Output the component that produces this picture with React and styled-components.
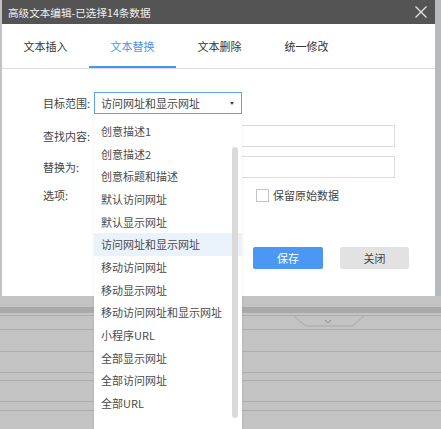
import React from "react";
import styled, { createGlobalStyle } from "styled-components";

const Global = createGlobalStyle`
  html, body { margin: 0; padding: 0; }
  body {
    background: #c3c3c3;
    font-family: "Noto Sans CJK SC", "Noto Sans", sans-serif;
    font-size: 11px;
    color: #444;
  }
  * { box-sizing: border-box; }
`;

const Page = styled.div`
  position: relative;
  width: 441px;
  height: 429px;
  overflow: hidden;
  background: #c3c3c3;
`;

const Backdrop = styled.div`
  display: flex;
  flex-direction: column;
`;

const BehindDialog = styled.div`
  height: 307px;
  display: flex;
  justify-content: flex-end;
`;

const SideStrip = styled.div`
  width: 6px;
  height: 296px;
  background: #b6b9be;
`;

const Band = styled.div`
  height: 6px;
  background: #a9a9a9;
`;

const TableRow = styled.div`
  position: relative;
  height: ${(p) => p.$h}px;
  border-bottom: 1px solid #adadad;
`;

const Handle = styled.svg`
  position: absolute;
  left: 293px;
  top: -1px;
`;

const Dialog = styled.div`
  position: absolute;
  left: 2px;
  top: 0;
  width: 433px;
  height: 296px;
  background: #fff;
  display: flex;
  flex-direction: column;
`;

const TitleBar = styled.div`
  height: 24px;
  background: #545454;
  color: #efefef;
  font-size: 10.6px;
  display: flex;
  align-items: center;
  justify-content: space-between;
  padding: 0 8px 0 6px;
`;

const Tabs = styled.div`
  display: flex;
  height: 45px;
  border-bottom: 1px solid #dedede;
`;

const Tab = styled.div`
  width: 87px;
  display: flex;
  align-items: center;
  justify-content: center;
  font-size: 11px;
  color: ${(p) => (p.$active ? "#4a94ee" : "#333")};
  border-bottom: 2px solid ${(p) => (p.$active ? "#4a94ee" : "transparent")};
  padding-top: 2px;
`;

const Body = styled.div`
  padding: 23px 0 0 41px;
  display: flex;
  flex-direction: column;
`;

const Row = styled.div`
  display: flex;
  align-items: center;
  height: 22px;
  margin-bottom: ${(p) => p.$mb || 0}px;
`;

const Label = styled.div`
  width: 51px;
  font-size: 11px;
  color: #444;
`;

const Select = styled.div`
  width: 148px;
  height: 22px;
  border: 1px solid #5fa0ef;
  display: flex;
  align-items: center;
  justify-content: space-between;
  padding: 0 7px 0 6px;
  font-size: 11px;
  color: #444;
`;

const Caret = styled.span`
  width: 0;
  height: 0;
  border-left: 2.5px solid transparent;
  border-right: 2.5px solid transparent;
  border-top: 3px solid #444;
`;

const Input = styled.div`
  width: 301px;
  height: 22px;
  border: 1px solid #dcdcdc;
`;

const Options = styled.div`
  display: flex;
  align-items: center;
  padding-left: 162px;
`;

const Option = styled.label`
  display: flex;
  align-items: center;
  gap: 4px;
  font-size: 11px;
  color: #444;
`;

const Box = styled.span`
  width: 13px;
  height: 13px;
  border: 1px solid #c4c4c4;
  background: #fff;
`;

const Buttons = styled.div`
  display: flex;
  justify-content: flex-end;
  gap: 17px;
  padding-right: 26px;
  margin-top: 41px;
`;

const Button = styled.div`
  width: ${(p) => p.$w}px;
  height: 22px;
  border-radius: 2px;
  display: flex;
  align-items: center;
  justify-content: center;
  font-size: 11px;
  background: ${(p) => (p.$primary ? "#4b97f4" : "#e2e2e2")};
  color: ${(p) => (p.$primary ? "#fff" : "#444")};
`;

const Menu = styled.div`
  position: absolute;
  left: 94px;
  top: 115px;
  width: 148px;
  height: 330px;
  background: #fff;
  box-shadow: 0 1px 3px rgba(0, 0, 0, 0.08);
  padding-top: 4.7px;
`;

const Item = styled.div`
  height: 22.67px;
  display: flex;
  align-items: center;
  padding-left: 7px;
  font-size: 11px;
  color: #4a4a4a;
  background: ${(p) => (p.$active ? "#eaf2fc" : "transparent")};
`;

const Thumb = styled.div`
  position: absolute;
  right: 4px;
  top: 32px;
  width: 6px;
  height: 271px;
  border-radius: 3px;
  background: #dadada;
`;

const items = [
  "创意描述1",
  "创意描述2",
  "创意标题和描述",
  "默认访问网址",
  "默认显示网址",
  "访问网址和显示网址",
  "移动访问网址",
  "移动显示网址",
  "移动访问网址和显示网址",
  "小程序URL",
  "全部显示网址",
  "全部访问网址",
  "全部URL",
];

export default function App() {
  return (
    <>
      <Global />
      <Page>
        <Backdrop>
          <BehindDialog>
            <SideStrip />
          </BehindDialog>
          <Band />
          <TableRow $h={3} />
          <TableRow $h={14}>
            <Handle width="72" height="12" viewBox="0 0 72 12">
              <path d="M1 1 L12 10.5 Q13 11 15 11 L57 11 Q59 11 60 10.5 L71 1" fill="none" stroke="#a9a9a9" strokeWidth="1" />
              <path d="M32 5 L35 8 L38 5" fill="none" stroke="#8a8a8a" strokeWidth="1" />
            </Handle>
          </TableRow>
          <TableRow $h={22} />
          <TableRow $h={21} />
          <TableRow $h={8} />
          <TableRow $h={21} />
          <TableRow $h={9} />
          <TableRow $h={20} />
        </Backdrop>

        <Dialog>
          <TitleBar>
            <span>高级文本编辑-已选择14条数据</span>
            <svg width="12" height="12" viewBox="0 0 12 12">
              <path d="M0.5 0.5 L11.5 11.5 M11.5 0.5 L0.5 11.5" stroke="#e2e2e2" strokeWidth="1.3" />
            </svg>
          </TitleBar>
          <Tabs>
            <Tab>文本插入</Tab>
            <Tab $active>文本替换</Tab>
            <Tab>文本删除</Tab>
            <Tab>统一修改</Tab>
          </Tabs>
          <Body>
            <Row $mb={11}>
              <Label>目标范围:</Label>
              <Select>
                <span>访问网址和显示网址</span>
                <Caret />
              </Select>
            </Row>
            <Row $mb={9}>
              <Label>查找内容:</Label>
              <Input />
            </Row>
            <Row $mb={6}>
              <Label>替换为:</Label>
              <Input />
            </Row>
            <Row>
              <Label>选项:</Label>
              <Options>
                <Option>
                  <Box />
                  保留原始数据
                </Option>
              </Options>
            </Row>
            <Buttons>
              <Button $primary $w={70}>保存</Button>
              <Button $w={69}>关闭</Button>
            </Buttons>
          </Body>
        </Dialog>

        <Menu>
          {items.map((t) => (
            <Item key={t} $active={t === "访问网址和显示网址"}>
              {t}
            </Item>
          ))}
          <Thumb />
        </Menu>
      </Page>
    </>
  );
}
